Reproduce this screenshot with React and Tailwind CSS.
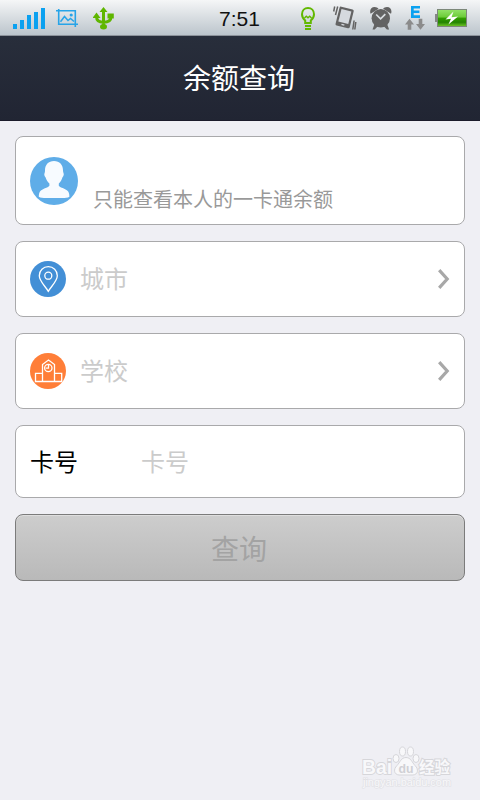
const SignalIcon = () => (
  <svg width="32" height="21" viewBox="0 0 32 21" fill="#0ba1f0">
    <rect x="0" y="16" width="4" height="5" />
    <rect x="7" y="12" width="4" height="9" />
    <rect x="14" y="7" width="4" height="14" />
    <rect x="21" y="4" width="4" height="17" />
    <rect x="28" y="0" width="4" height="21" />
  </svg>
);

const ScreenshotIcon = () => (
  <svg width="22" height="18" viewBox="0 0 22 18" fill="none" stroke="#27a4e8" strokeWidth="1.6">
    <path d="M2.7 0v15.3H22M0 1.8h19.3V18" />
    <path d="m4.5 12.8 4-5.300 3.500 4 2.500-2 3.500 3" strokeWidth="1.500" />
    <circle cx="15.200" cy="6" r="1.600" fill="#27a4e8" stroke="none" />
  </svg>
);

const UsbIcon = () => (
  <svg width="22" height="23" viewBox="0 0 22 23" fill="#5fb600">
    <path d="M10.5 0 14.500 5h-8zM3.500 5.500 7.500 11H-.5zM14.500 6.500h6.300v5h-6.300z" />
    <path d="M10.500 3v17M3.500 9.500c0 4 3 5.800 7 5.800s7.500-1.600 7.500-5.800" fill="none" stroke="#5fb600" strokeWidth="3" />
    <ellipse cx="10.500" cy="19.700" rx="3.500" ry="2.700" />
  </svg>
);

const BulbIcon = () => (
  <svg width="14" height="23" viewBox="0 0 14 23" fill="none" stroke="#62b800" strokeWidth="2">
    <path d="M4.200 16v-2.500C2.200 11.800 1 10 1 7.200 1 3.600 3.600 1 7 1s6 2.600 6 6.200c0 2.800-1.200 4.600-3.200 6.300V16z" />
    <path d="m3.500 11 1.800-1.700L7 10.800l1.700-1.500 1.800 1.700" strokeWidth="1.500" />
    <path d="M4 19h6M4 22h6" />
  </svg>
);

const VibrateIcon = () => (
  <svg width="24" height="24" viewBox="0 0 24 24" fill="none" stroke="#636363">
    <g transform="rotate(14 11.7 11.6)">
      <rect x="4.300" y="1.800" width="14.600" height="19.400" rx="1.500" fill="#636363" stroke="none" />
      <rect x="6.500" y="4" width="10.200" height="13" fill="#d5d9de" stroke="none" />
      <rect x="10.200" y="18.300" width="3" height="1.400" fill="#d5d9de" stroke="none" />
    </g>
    <path d="M1.700.5.7 5.500M4.700.5 2.500 9M19.800 23.500l1.300-9M22.800 16l-1 7.500" strokeWidth="1.500" />
  </svg>
);

const AlarmIcon = () => (
  <svg width="22" height="24" viewBox="0 0 22 24" fill="#636363">
    <path d="M.6 7.800C-.8 4 1.200.9 4.600.9c1.800 0 3 .7 3.900 1.800zM21 7.800C22.400 4 20.400.9 17 .9c-1.800 0-3 .7-3.900 1.800z" />
    <circle cx="10.800" cy="12.200" r="9.200" />
    <path d="m4.500 18-2 5.500h2.200l3.600-3.800zM17.100 18l2 5.500h-2.200l-3.600-3.800z" />
    <path d="m6.200 8.500 4.400 4.300 4.700-4.600" fill="none" stroke="#d9dde1" strokeWidth="1.700" />
  </svg>
);

const EdgeIcon = () => (
  <svg width="20" height="25" viewBox="0 0 20 25" fill="#8b8b8b">
    <path d="M6 0h9v2.400H8.700v2.200h5.700v2.300H8.700v2.400H15V12H6z" fill="#0ba1f0" />
    <path d="m4.500 12.800 4.500 5.700H6.300v5.300H2.700v-5.300H0zM15.500 23.800l4.500-5.700h-2.700v-5.300h-3.600v5.300H11z" />
  </svg>
);

const BatteryIcon = () => (
  <svg width="32" height="18" viewBox="0 0 32 18">
    <defs>
      <linearGradient id="charge" x1="0" y1="0" x2="0" y2="1">
        <stop offset="0" stopColor="#94e36a" />
        <stop offset=".45" stopColor="#6ccb38" />
        <stop offset=".5" stopColor="#32a000" />
        <stop offset=".75" stopColor="#248300" />
        <stop offset="1" stopColor="#72c928" />
      </linearGradient>
    </defs>
    <path d="M0 5h2v8H0z" fill="#858886" />
    <rect x="2.500" y=".5" width="29" height="17" fill="url(#charge)" stroke="#7c8779" />
    <path d="m18.500 2.500-8 8 5.500-.8-2.600 5.800 9.600-8-6.500.7z" fill="#fff" />
  </svg>
);

const AvatarIcon = () => (
  <svg width="48" height="48" viewBox="0 0 48 48">
    <circle cx="24" cy="24" r="24" fill="#5fade8" />
    <path
      d="M24 4c5.600 0 9 3.800 9 9.200 0 .9.1 1.800.4 2.600.8 1.500.3 3.200-.9 4.400-.7 2.600-2 4.700-3.700 6.200v2.400c1.500 2.200 7.300 2.800 9.400 5.700 1 1.500 1.200 3.500 1.200 5.200-1.500 1.200-4.500 1.300-7 1.400H15.800c-2.500-.1-5.500-.2-7-1.400 0-1.700.2-3.700 1.200-5.200 2.100-2.900 7.900-3.500 9.400-5.700v-2.400c-1.700-1.500-3.200-3.600-3.900-6.200-1.200-1.200-1.600-2.900-.8-4.400.3-.8.3-1.700.3-2.600C15 7.800 18.400 4 24 4z"
      fill="#f7fbff"
    />
  </svg>
);

const CityIcon = () => (
  <svg width="36" height="36" viewBox="0 0 36 36">
    <circle cx="18" cy="18" r="18" fill="#438fd6" />
    <g fill="none" stroke="#fff" strokeWidth="1.300">
      <path d="M18.300 30.300C15.500 25.500 9.300 20 9.300 14.700c0-5.200 4-9 9-9s9 3.800 9 9c0 5.300-6.200 10.800-9 15.600z" />
      <circle cx="18.300" cy="14.700" r="3.500" />
    </g>
  </svg>
);

const SchoolIcon = () => (
  <svg width="36" height="36" viewBox="0 0 36 36">
    <circle cx="18" cy="18" r="18" fill="#ff7e38" />
    <g fill="none" stroke="#fff" strokeWidth="1.300">
      <path d="M12.500 28.500v-17l6-4.500 6 4.500v17M12.500 20.300h-7v8.200h26.200v-8.200h-7.200" />
      <circle cx="18.300" cy="15" r="3.700" />
      <path d="M18.500 12v3.200h-2.800" />
    </g>
  </svg>
);

const ArrowIcon = () => (
  <svg width="12" height="20" viewBox="0 0 12 20" fill="none" stroke="#a8a8a8" strokeWidth="3.200">
    <path d="m1.200 1.200 8 8.800-8 8.800" />
  </svg>
);

const StatusBar = () => (
  <div className="h-9 flex items-start bg-linear-to-b from-[#f5f6f7] to-[#bcc5cc] border-b border-[#8c929a] pl-[13px]">
    <div className="mt-2"><SignalIcon /></div>
    <div className="mt-[9px] ml-[11px]"><ScreenshotIcon /></div>
    <div className="mt-[7px] ml-[15px]"><UsbIcon /></div>
    <span className="ml-[104px] mt-[7px] w-[41px] text-[21px] leading-6 text-[#111]">7:51</span>
    <div className="mt-[7px] ml-[41px]"><BulbIcon /></div>
    <div className="mt-1.5 ml-[18px]"><VibrateIcon /></div>
    <div className="mt-1.5 ml-[13px]"><AlarmIcon /></div>
    <div className="mt-1.5 ml-[13px]"><EdgeIcon /></div>
    <div className="mt-[9px] ml-[10px]"><BatteryIcon /></div>
  </div>
);

const SelectRow = ({ icon, label }) => (
  <button
    type="button"
    className="h-[76px] w-full flex items-center bg-white border border-[#a9a9ab] rounded-lg pl-[14px] pr-[14px]"
  >
    {icon}
    <span className="ml-[14px] flex-1 text-left text-2xl text-[#cbcbcb] pt-0.5">{label}</span>
    <ArrowIcon />
  </button>
);

const Watermark = () => (
  <div className="absolute left-[361px] top-[745px]">
    <svg width="94" height="46" viewBox="0 0 94 46" fill="#f8f8fa" stroke="#d6d6da" fontFamily="Liberation Sans, Noto Sans CJK SC, sans-serif">
      <ellipse cx="35" cy="13.500" rx="3" ry="4" />
      <ellipse cx="41.500" cy="6.500" rx="3" ry="4.500" />
      <ellipse cx="49.500" cy="6.500" rx="3" ry="4.500" />
      <ellipse cx="55" cy="13.500" rx="3" ry="4" />
      <path d="M45 12.500c5 0 6 5 9 8 4 4 3 9 -2 9.500H38c-5-.5-6-5.500-2-9.500 3-3 4-8 9-8z" />
      <text x="1" y="29" fontSize="20" fontWeight="700" strokeWidth="1.800" paintOrder="stroke" textLength="30" lengthAdjust="spacingAndGlyphs">Bai</text>
      <text x="37.500" y="28" fontSize="13" fontWeight="700" fill="#d0d0d5" stroke="none" textLength="15" lengthAdjust="spacingAndGlyphs">du</text>
      <text x="58" y="28" fontSize="15.500" fontWeight="700" strokeWidth="2" paintOrder="stroke" textLength="31" lengthAdjust="spacingAndGlyphs">经验</text>
      <text x="2" y="41" fontSize="10" strokeWidth="1.200" stroke="#e1e1e5" paintOrder="stroke" textLength="88" lengthAdjust="spacingAndGlyphs">jingyan.baidu.com</text>
    </svg>
  </div>
);

const App = () => {
  return (
    <div className="relative w-[480px] h-[800px] overflow-hidden bg-[#efeff4] font-['Liberation_Sans','Noto_Sans_CJK_SC',sans-serif]">
      <StatusBar />

      <header className="h-[85px] flex items-center justify-center bg-linear-to-b from-[#282e3b] to-[#212533] border-b border-[#1b1b2b]">
        <h1 className="text-[28px] leading-10 text-white pt-1 pr-0.5">余额查询</h1>
      </header>

      <main className="flex flex-col gap-4 p-[15px]">
        <section className="h-[89px] flex items-start bg-white border border-[#a9a9ab] rounded-lg pl-[14px] pt-5">
          <AvatarIcon />
          <p className="ml-[15px] mt-7 text-xl leading-[30px] text-[#999]">只能查看本人的一卡通余额</p>
        </section>

        <SelectRow icon={<CityIcon />} label="城市" />
        <SelectRow icon={<SchoolIcon />} label="学校" />

        <label className="h-[73px] flex items-center bg-white border border-[#a9a9ab] rounded-lg px-[14px] pt-0.5 text-2xl">
          <span className="w-[111px] text-black">卡号</span>
          <input
            type="text"
            placeholder="卡号"
            className="flex-1 min-w-0 outline-none placeholder:text-[#cbcbcb]"
          />
        </label>

        <button
          type="button"
          disabled
          className="h-[67px] bg-linear-to-b from-[#cdcdcd] to-[#b9b9b9] border border-[#7b7b7b] rounded-lg pt-1.5 pr-0.5 text-[28px] text-[#a3a3a3] shadow-[inset_0_1px_0_#dedede]"
        >
          查询
        </button>
      </main>

      <Watermark />
    </div>
  );
};

export default App;
